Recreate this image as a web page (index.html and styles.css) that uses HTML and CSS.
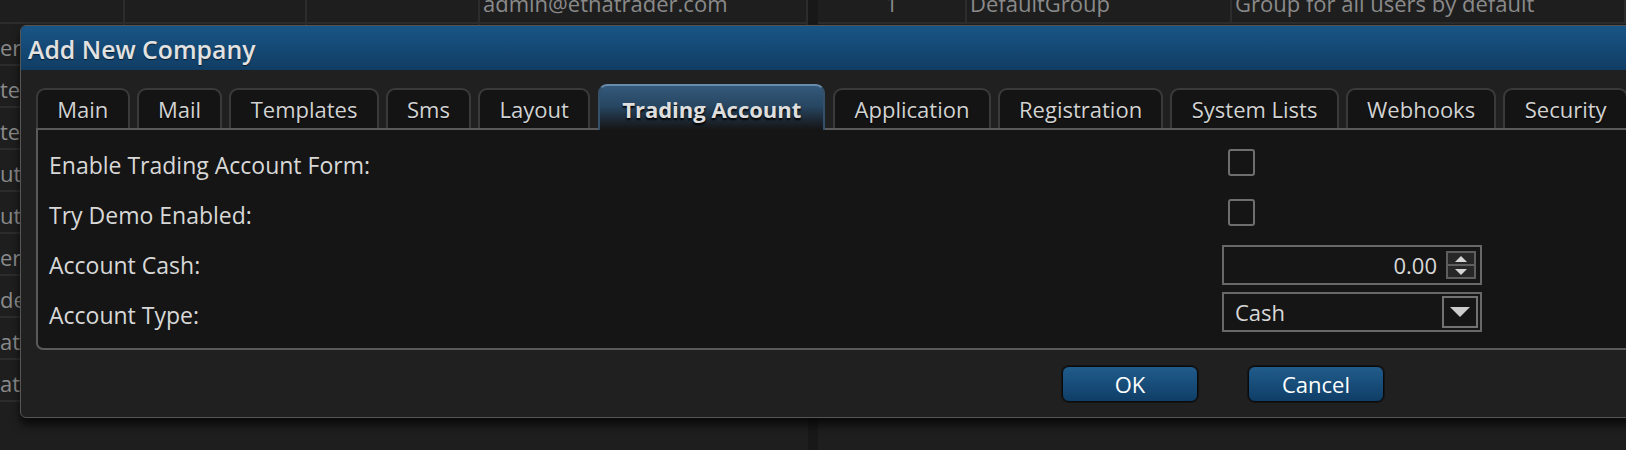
FILE: index.html
```html
<!DOCTYPE html>
<html>
<head>
<meta charset="utf-8">
<title>Add New Company</title>
<link rel="stylesheet" href="styles.css">
</head>
<body>
<div class="backdrop">
  <div class="table table-left">
    <div class="row row-top">
      <div class="cell"><span class="clip-text"></span></div>
      <div class="cell"><span class="clip-text"></span></div>
      <div class="cell"><span class="clip-text"></span></div>
      <div class="cell"><span class="clip-text">admin@ethatrader.com</span></div>
    </div>
    <div class="row"><div class="cell">er</div><div class="cell"></div><div class="cell"></div><div class="cell"></div></div>
    <div class="row"><div class="cell">te</div><div class="cell"></div><div class="cell"></div><div class="cell"></div></div>
    <div class="row"><div class="cell">te</div><div class="cell"></div><div class="cell"></div><div class="cell"></div></div>
    <div class="row"><div class="cell">ut</div><div class="cell"></div><div class="cell"></div><div class="cell"></div></div>
    <div class="row"><div class="cell">ut</div><div class="cell"></div><div class="cell"></div><div class="cell"></div></div>
    <div class="row"><div class="cell">era</div><div class="cell"></div><div class="cell"></div><div class="cell"></div></div>
    <div class="row"><div class="cell">de</div><div class="cell"></div><div class="cell"></div><div class="cell"></div></div>
    <div class="row"><div class="cell">at</div><div class="cell"></div><div class="cell"></div><div class="cell"></div></div>
    <div class="row"><div class="cell">at</div><div class="cell"></div><div class="cell"></div><div class="cell"></div></div>
  </div>
  <div class="splitter"></div>
  <div class="table table-right">
    <div class="row row-top">
      <div class="cell center"><span class="clip-text">1</span></div>
      <div class="cell"><span class="clip-text">DefaultGroup</span></div>
      <div class="cell"><span class="clip-text">Group for all users by default</span></div>
    </div>
  </div>
</div>

<div class="dialog">
  <div class="titlebar">Add New Company</div>
  <div class="tabs">
    <div class="tab">Main</div>
    <div class="tab">Mail</div>
    <div class="tab">Templates</div>
    <div class="tab">Sms</div>
    <div class="tab">Layout</div>
    <div class="tab active">Trading Account</div>
    <div class="tab">Application</div>
    <div class="tab">Registration</div>
    <div class="tab">System Lists</div>
    <div class="tab">Webhooks</div>
    <div class="tab">Security</div>
  </div>
  <div class="panel">
    <div class="form-row">
      <span class="label">Enable Trading Account Form:</span>
      <span class="checkbox"></span>
    </div>
    <div class="form-row">
      <span class="label">Try Demo Enabled:</span>
      <span class="checkbox"></span>
    </div>
    <div class="form-row">
      <span class="label">Account Cash:</span>
      <div class="numbox">
        <span class="num-value">0.00</span>
        <div class="spin">
          <span class="spin-btn"><span class="tri-up"></span></span>
          <span class="spin-btn"><span class="tri-down-small"></span></span>
        </div>
      </div>
    </div>
    <div class="form-row">
      <span class="label">Account Type:</span>
      <div class="combo">
        <span class="combo-value">Cash</span>
        <span class="combo-btn"><span class="tri-down"></span></span>
      </div>
    </div>
  </div>
  <div class="footer">
    <button class="btn">OK</button>
    <button class="btn">Cancel</button>
  </div>
</div>
</body>
</html>
```

FILE: styles.css
```css
html, body {
  margin: 0;
  padding: 0;
}
body {
  width: 1626px;
  height: 450px;
  overflow: hidden;
  background: #1e1e1e;
  font-family: "Open Sans", "Noto Sans", sans-serif;
  position: relative;
}

/* background grids */
.backdrop {
  display: flex;
  height: 450px;
}
.table {
  display: flex;
  flex-direction: column;
}
.table-left {
  width: 808px;
}
.splitter {
  width: 10px;
  background: #181818;
}
.table-right {
  flex: 1;
}
.row {
  display: grid;
  height: 42px;
  box-sizing: border-box;
  border-bottom: 2px solid #2c2c2c;
}
.table-left .row {
  grid-template-columns: 125px 182px 173px 1fr;
}
.table-right .row {
  grid-template-columns: 149px 265px 1fr;
}
.row-top {
  height: 24px;
  overflow: hidden;
}
.cell {
  border-right: 2px solid #2c2c2c;
  color: #8a8a8a;
  font-size: 22px;
  line-height: 40px;
  padding-top: 3px;
  box-sizing: border-box;
  overflow: hidden;
  white-space: nowrap;
}
.row-top .cell {
  padding: 0 0 0 3px;
}
.row-top .cell.center {
  text-align: center;
  padding: 0;
}
.clip-text {
  display: block;
  line-height: 24px;
  margin-top: -9px;
}

/* dialog */
.dialog {
  position: absolute;
  left: 20px;
  top: 25px;
  width: 1640px;
  height: 393px;
  box-sizing: border-box;
  background: #202020;
  border: 1px solid #555555;
  border-radius: 6px;
  box-shadow: 0 7px 9px rgba(0, 0, 0, 0.65);
  display: flex;
  flex-direction: column;
}
.titlebar {
  height: 44px;
  box-sizing: border-box;
  padding: 2px 0 0 7px;
  line-height: 42px;
  font-size: 24.8px;
  font-weight: 600;
  color: #e2e2e2;
  text-shadow: 0 1px 1px rgba(0, 0, 0, 0.6);
  background: linear-gradient(#185586, #113d64);
  border-radius: 5px 5px 0 0;
}

/* tabs */
.tabs {
  display: flex;
  align-items: flex-end;
  gap: 7px;
  margin-top: 14px;
  padding-left: 15px;
  height: 44px;
  position: relative;
  z-index: 1;
}
.tab {
  height: 40px;
  box-sizing: border-box;
  padding: 2px 19.3px 0;
  border: 2px solid #3a3a3a;
  border-bottom: none;
  border-radius: 9px 9px 0 0;
  background: #141414;
  color: #d2d2d2;
  font-size: 22px;
  line-height: 34px;
  white-space: nowrap;
  text-shadow: 0 1px 1px #000;
}
.tab.active {
  height: 46px;
  margin-bottom: -2px;
  padding: 6px 22px 0;
  margin-left: 1px;
  margin-right: 1px;
  border-color: #6a8cab #35506a;
  background: linear-gradient(#34597b 0%, #274763 45%, #1a2129 85%, #151515 100%);
  font-weight: 700;
  color: #dedede;
  text-shadow: 0 2px 2px #000;
}

/* panel */
.panel {
  margin-left: 15px;
  height: 222px;
  box-sizing: border-box;
  border: 2px solid #5a5a5a;
  border-radius: 0 0 0 7px;
  background: #151515;
  padding: 10px 0 8px 11px;
}
.form-row {
  display: grid;
  grid-template-columns: 1173px 260px;
  align-items: center;
  height: 50px;
}
.label {
  font-size: 23px;
  color: #d8d8d8;
  white-space: nowrap;
}
.checkbox {
  width: 27px;
  height: 27px;
  box-sizing: border-box;
  border: 2px solid #6e6e6e;
  border-radius: 3px;
  margin-left: 6px;
  margin-bottom: 6px;
}
.numbox {
  width: 260px;
  height: 40px;
  box-sizing: border-box;
  border: 2px solid #686868;
  display: flex;
  align-items: center;
  justify-content: flex-end;
  gap: 9px;
  padding-right: 4px;
}
.num-value, .combo-value {
  font-size: 22px;
  color: #d8d8d8;
}
.spin {
  width: 30px;
  height: 28px;
  box-sizing: border-box;
  border: 2px solid #5e5e5e;
  background: #5e5e5e;
  display: flex;
  flex-direction: column;
  gap: 2px;
}
.spin-btn {
  flex: 1;
  background: #272727;
  display: flex;
  align-items: center;
  justify-content: center;
}
.tri-up {
  width: 0;
  height: 0;
  border-left: 6px solid transparent;
  border-right: 6px solid transparent;
  border-bottom: 6px solid #d6d6d6;
}
.tri-down-small {
  width: 0;
  height: 0;
  border-left: 6px solid transparent;
  border-right: 6px solid transparent;
  border-top: 6px solid #d6d6d6;
}
.combo {
  width: 260px;
  height: 40px;
  box-sizing: border-box;
  border: 2px solid #686868;
  display: flex;
  align-items: center;
  justify-content: space-between;
  padding: 0 2px 0 11px;
  margin-bottom: 6px;
}
.combo-btn {
  width: 36px;
  height: 32px;
  box-sizing: border-box;
  border: 2px solid #727272;
  display: flex;
  align-items: center;
  justify-content: center;
}
.tri-down {
  width: 0;
  height: 0;
  border-left: 10px solid transparent;
  border-right: 10px solid transparent;
  border-top: 10px solid #cdcdcd;
}

/* footer */
.footer {
  flex: 1;
  display: flex;
  justify-content: flex-end;
  align-items: flex-start;
  gap: 50px;
  padding: 16px 275px 0 0;
}
.btn {
  width: 136px;
  height: 36px;
  box-sizing: border-box;
  border: 1px solid #0a0a0a;
  border-radius: 7px;
  background: linear-gradient(#205c8b, #0f3e67);
  box-shadow: 0 0 0 1px #141414;
  color: #ffffff;
  font-family: "Open Sans", "Noto Sans", sans-serif;
  font-size: 22px;
  line-height: 32px;
  padding: 0;
}
```
